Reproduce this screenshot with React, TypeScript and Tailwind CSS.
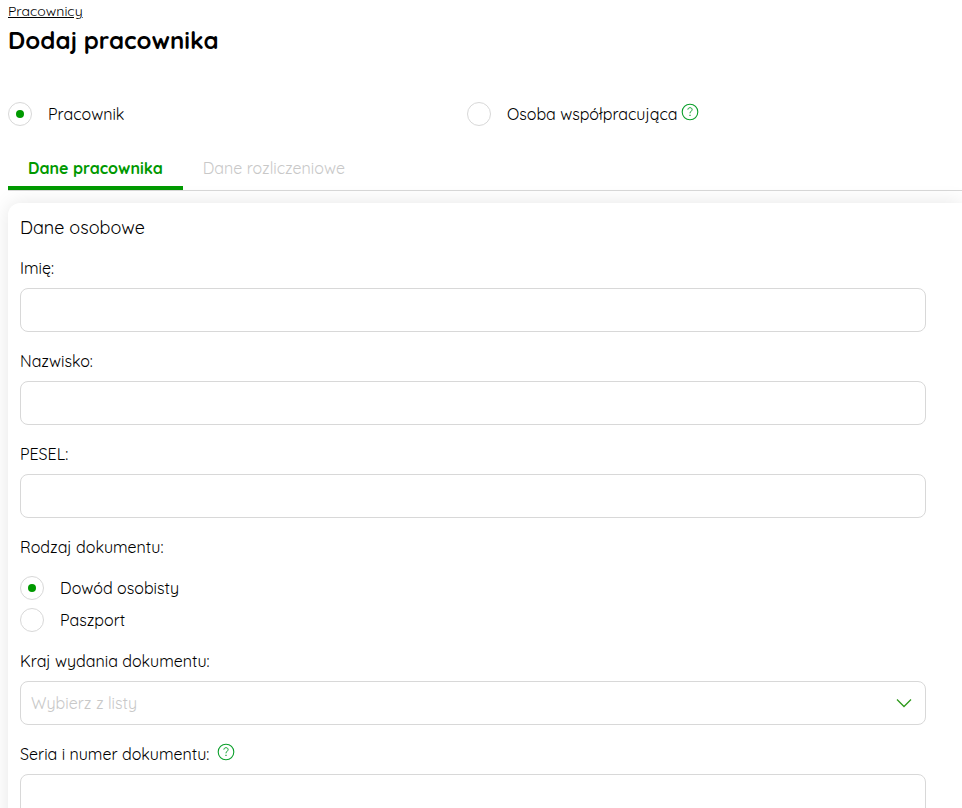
import { useState } from 'react';
import type { ReactNode } from 'react';

const textFields = [
  { id: 'first-name', label: 'Imię:' },
  { id: 'last-name', label: 'Nazwisko:' },
  { id: 'pesel', label: 'PESEL:' },
] as const;

const tabs = ['Dane pracownika', 'Dane rozliczeniowe'] as const;

const inputClass =
  'block h-11 w-full rounded-lg border border-[#d8d8d8] bg-white px-[10px] outline-none focus:border-[#009900]';

function HelpIcon() {
  return (
    <svg viewBox="0 0 18 18" className="mb-1 size-[18px] shrink-0" fill="none" stroke="#0a9f2a" aria-hidden="true">
      <circle cx="9" cy="9" r="7.8" strokeWidth="1.1" />
      <path d="M6.9 6.6c0-1.2.9-1.9 2.1-1.9s2.1.7 2.1 1.8c0 1.7-2.1 1.8-2.1 3.8" strokeWidth="1" />
      <path d="M9 11.8v1.3" strokeWidth="1.2" />
    </svg>
  );
}

type RadioProps = {
  name: string;
  value: string;
  current: string;
  onSelect: (value: string) => void;
  children: ReactNode;
};

function Radio({ name, value, current, onSelect, children }: RadioProps) {
  return (
    <label className="flex h-6 cursor-pointer items-center gap-4">
      <input
        type="radio"
        name={name}
        value={value}
        checked={current === value}
        onChange={() => onSelect(value)}
        className="grid size-6 shrink-0 appearance-none place-items-center rounded-full border border-[#d8d8d8] bg-white before:size-2 before:rounded-full checked:before:bg-[#009900]"
      />
      <span className="flex h-6 items-center gap-1 leading-6">{children}</span>
    </label>
  );
}

export default function App() {
  const [kind, setKind] = useState('employee');
  const [documentType, setDocumentType] = useState('id-card');
  const [activeTab, setActiveTab] = useState<string>(tabs[0]);

  return (
    <main className="min-h-screen overflow-x-clip bg-white pl-2 font-[Quicksand,Inter,sans-serif] text-base font-normal text-black">
      <nav className="text-sm leading-[22px]">
        <a href="#pracownicy" className="underline">
          Pracownicy
        </a>
      </nav>
      <h1 className="mt-[2px] text-2xl leading-8 font-bold">Dodaj pracownika</h1>

      <div className="mt-[46px] grid grid-cols-2 pr-9">
        <Radio name="kind" value="employee" current={kind} onSelect={setKind}>
          Pracownik
        </Radio>
        <Radio name="kind" value="associate" current={kind} onSelect={setKind}>
          Osoba współpracująca
          <HelpIcon />
        </Radio>
      </div>

      {/* Tabs */}
      <div role="tablist" className="mt-6 flex border-b border-[#d8d8d8]">
        {tabs.map((tab) => (
          <button
            key={tab}
            type="button"
            role="tab"
            aria-selected={activeTab === tab}
            onClick={() => setActiveTab(tab)}
            className="h-10 cursor-pointer border-b-4 border-transparent px-5 text-[#c8c8c8] aria-selected:border-[#009900] aria-selected:font-bold aria-selected:text-[#009900]"
          >
            {tab}
          </button>
        ))}
      </div>

      {/* Personal data */}
      <form className="mt-3 rounded-tl-xl bg-white pt-[13px] pr-9 pb-6 pl-3 shadow-[0_0_20px_rgba(0,0,0,0.1)]">
        <h2 className="mb-4 text-lg leading-6">Dane osobowe</h2>

        <div className="flex flex-col gap-[17px]">
          {textFields.map(({ id, label }) => (
            <div key={id} className="flex flex-col gap-2">
              <label htmlFor={id} className="leading-6">
                {label}
              </label>
              <input id={id} type="text" className={inputClass} />
            </div>
          ))}

          <fieldset>
            <legend className="mb-[17px] leading-6">Rodzaj dokumentu:</legend>
            <div className="flex flex-col gap-2">
              <Radio name="document" value="id-card" current={documentType} onSelect={setDocumentType}>
                Dowód osobisty
              </Radio>
              <Radio name="document" value="passport" current={documentType} onSelect={setDocumentType}>
                Paszport
              </Radio>
            </div>
          </fieldset>

          <div className="flex flex-col gap-2">
            <label htmlFor="country" className="leading-6">
              Kraj wydania dokumentu:
            </label>
            <div className="relative">
              <select id="country" defaultValue="" className={`${inputClass} appearance-none text-[#c8c8c8]`}>
                <option value="">Wybierz z listy</option>
                <option value="pl">Polska</option>
              </select>
              <svg
                viewBox="0 0 16 10"
                className="pointer-events-none absolute top-[17px] right-[14px] h-[10px] w-4"
                fill="none"
                stroke="#2f9a1c"
                strokeWidth="1.3"
                aria-hidden="true"
              >
                <path d="M1 1.5 8 8.5 15 1.5" />
              </svg>
            </div>
          </div>

          <div className="flex flex-col gap-2">
            <label htmlFor="document-number" className="flex h-6 items-center gap-2 leading-6">
              Seria i numer dokumentu:
              <HelpIcon />
            </label>
            <input id="document-number" type="text" className={inputClass} />
          </div>
        </div>
      </form>
    </main>
  );
}
